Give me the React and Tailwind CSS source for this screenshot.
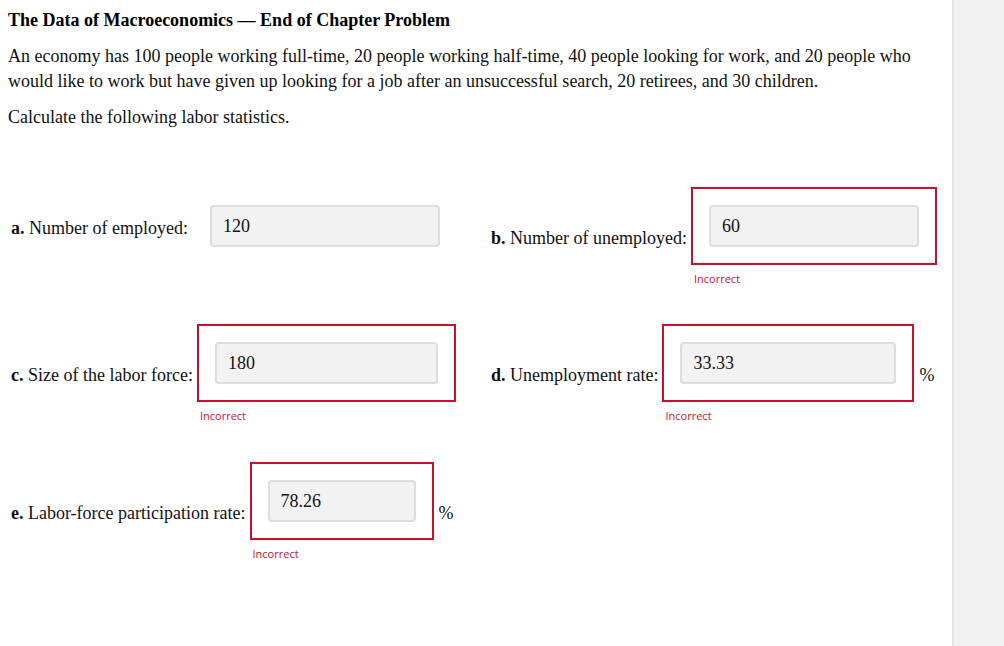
import React from 'react';

const serif = { fontFamily: '"Liberation Serif", "Times New Roman", serif' };

function Answer({ letter, label, value, width, wrong, suffix, labelTop }) {
  return (
    <div className="flex items-start">
      <span className="text-[18px] leading-[20px] whitespace-nowrap" style={{ marginTop: labelTop }}>
        <b>{letter}.</b> {label}
      </span>
      <div className="ml-[4px]">
        <div className={`border-2 p-4 ${wrong ? 'border-[#c8102e]' : 'border-transparent'}`}>
          <div
            className="h-[42px] rounded-[4px] border-2 border-[#dddddd] bg-[#f2f2f2] pl-[11px] text-[18px] leading-[38px] text-[#111]"
            style={{ width }}
          >
            {value}
          </div>
        </div>
        {wrong && (
          <div className="ml-[3px] mt-[6px] text-[11px] leading-[15px] text-[#c8102e]" style={{ fontFamily: '"Open Sans", "Noto Sans", sans-serif' }}>
            Incorrect
          </div>
        )}
      </div>
      {suffix && <span className="ml-[5px] mt-[41px] text-[18px] leading-[20px]">%</span>}
    </div>
  );
}

export default function App() {
  return (
    <div className="flex min-h-[646px] bg-white text-[#111]" style={serif}>
      <main className="w-[952px] shrink-0 pl-2 pr-3">
        <h1 className="mt-[8px] text-[18px] font-bold leading-[24px] text-black">
          The Data of Macroeconomics — End of Chapter Problem
        </h1>
        <p className="mt-[12px] text-[18px] leading-[25px]">
          An economy has 100 people working full-time, 20 people working half-time, 40 people looking for work, and 20 people who would like to work but have given up looking for a job after an unsuccessful search, 20 retirees, and 30 children.
        </p>
        <p className="mt-[11px] text-[18px] leading-[25px]">Calculate the following labor statistics.</p>

        <div className="mt-[57px] pl-[3px]">
          <div className="grid h-[137px] grid-cols-[480px_1fr]">
            <Answer letter="a" label="Number of employed:" value="120" width={230} labelTop={31} />
            <Answer letter="b" label="Number of unemployed:" value="60" width={210} wrong labelTop={41} />
          </div>
          <div className="grid h-[138px] grid-cols-[480px_1fr]">
            <Answer letter="c" label="Size of the labor force:" value="180" width={223} wrong labelTop={41} />
            <Answer letter="d" label="Unemployment rate:" value="33.33" width={216} wrong suffix labelTop={41} />
          </div>
          <div className="grid grid-cols-[480px_1fr]">
            <Answer letter="e" label="Labor-force participation rate:" value="78.26" width={148} wrong suffix labelTop={41} />
          </div>
        </div>
      </main>
      <aside className="flex-1 border-l-2 border-[#e4e4e4] bg-[#f2f2f2]" />
    </div>
  );
}
